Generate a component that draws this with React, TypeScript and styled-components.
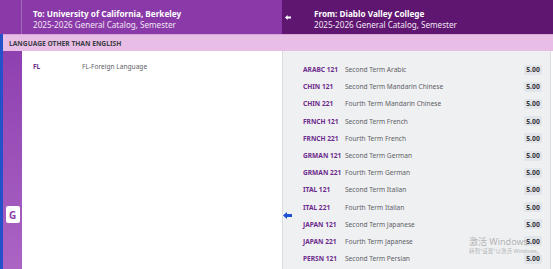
import React from 'react';
import styled, { createGlobalStyle } from 'styled-components';

const GlobalStyle = createGlobalStyle`
    html, body {
        margin: 0;
        padding: 0;
        background: #ffffff;
    }
    body {
        font-family: 'Noto Sans', 'Noto Sans CJK SC', sans-serif;
        overflow: hidden;
    }
`;

const Page = styled.div`
    position: relative;
    width: 553px;
    height: 269px;
    overflow: hidden;
    background: #ffffff;
`;

const Header = styled.div`
    display: flex;
    height: 34px;
`;

const HeaderSide = styled.div<{ $dark?: boolean }>`
    display: flex;
    align-items: stretch;
    flex: ${(p) => (p.$dark ? '1' : '0 0 282px')};
    background: ${(p) => (p.$dark ? '#5f1670' : '#8a3aa8')};
    color: #ffffff;
`;

const HeaderGutter = styled.div<{ $dark?: boolean }>`
    flex: 0 0 ${(p) => (p.$dark ? '21px' : '22px')};
    display: flex;
    align-items: center;
    justify-content: flex-start;
    padding-left: ${(p) => (p.$dark ? '3px' : '0')};
    padding-top: ${(p) => (p.$dark ? '1px' : '0')};
    box-sizing: border-box;
    border-right: ${(p) => (p.$dark ? 'none' : '1px solid #a46ac0')};
`;

const HeaderText = styled.div`
    display: flex;
    flex-direction: column;
    justify-content: center;
    padding: 3px 0 0 11px;
`;

const HeaderTitle = styled.div`
    font-size: 8.2px;
    font-weight: 700;
    line-height: 12px;
`;

const HeaderSub = styled.div`
    font-size: 8.1px;
    line-height: 10px;
    color: #f1e4f5;
`;

const Section = styled.div`
    border-left: 3px solid #2451c9;
`;

const Band = styled.div`
    height: 17px;
    display: flex;
    align-items: center;
    padding-left: 6px;
    background: #e8bde6;
    border-top: 1px solid #d7a6d6;
    box-sizing: border-box;
    font-size: 6.7px;
    font-weight: 700;
    color: #3d3d44;
`;

const Body = styled.div`
    position: relative;
    display: flex;
    height: 218px;
`;

const Gutter = styled.div`
    flex: 0 0 19px;
    display: flex;
    flex-direction: column;
    align-items: center;
    padding-top: 155px;
    box-sizing: border-box;
    background: linear-gradient(#8e40b0, #ab64c4);
`;

const Badge = styled.div`
    width: 14px;
    height: 17px;
    border-radius: 2px;
    background: #ffffff;
    display: flex;
    align-items: center;
    justify-content: center;
    font-size: 10px;
    font-weight: 700;
    color: #8a3aa8;
`;

const Target = styled.div`
    flex: 0 0 260px;
    padding: 10px 0 0 11px;
    box-sizing: border-box;
`;

const TargetRow = styled.div`
    display: flex;
    align-items: center;
    height: 10px;
    font-size: 6.6px;
`;

const Code = styled.span<{ $width: number }>`
    flex: 0 0 auto;
    min-width: ${(p) => p.$width}px;
    margin-right: 3px;
    white-space: nowrap;
    font-weight: 700;
    color: #6c2b8c;
`;

const Desc = styled.span`
    flex: 1;
    white-space: nowrap;
    color: #606066;
`;

const Source = styled.div`
    flex: 1;
    margin-right: 2px;
    padding: 10px 8px 0 20px;
    background: #eff0f2;
    border-left: 1px solid #dadce0;
    border-right: 1px solid #dadce0;
`;

const CourseRow = styled.div`
    display: flex;
    align-items: center;
    height: 17.2px;
    font-size: 6.6px;
`;

const Units = styled.span`
    width: 18px;
    height: 10px;
    display: flex;
    align-items: center;
    justify-content: center;
    border-radius: 2px;
    background: #e1e4e8;
    font-size: 6.8px;
    font-weight: 700;
    color: #35353a;
`;

const MapArrow = styled.div`
    position: absolute;
    left: 280px;
    top: 161px;
    width: 9px;
    height: 7px;
    display: flex;
`;

const Watermark = styled.div`
    position: absolute;
    left: 469px;
    top: 236px;
    color: rgba(150, 150, 150, 0.7);
    pointer-events: none;
`;

const WatermarkTitle = styled.div`
    font-size: 9px;
    line-height: 11px;
`;

const WatermarkSub = styled.div`
    font-size: 5.5px;
    line-height: 8px;
    white-space: nowrap;
`;

const courses = [
    ['ARABC 121', 'Second Term Arabic'],
    ['CHIN 121', 'Second Term Mandarin Chinese'],
    ['CHIN 221', 'Fourth Term Mandarin Chinese'],
    ['FRNCH 121', 'Second Term French'],
    ['FRNCH 221', 'Fourth Term French'],
    ['GRMAN 121', 'Second Term German'],
    ['GRMAN 221', 'Fourth Term German'],
    ['ITAL 121', 'Second Term Italian'],
    ['ITAL 221', 'Fourth Term Italian'],
    ['JAPAN 121', 'Second Term Japanese'],
    ['JAPAN 221', 'Fourth Term Japanese'],
    ['PERSN 121', 'Second Term Persian'],
];

const App = () => {
    return (
        <Page>
            <GlobalStyle />
            <Header>
                <HeaderSide>
                    <HeaderGutter />
                    <HeaderText>
                        <HeaderTitle>To: University of California, Berkeley</HeaderTitle>
                        <HeaderSub>2025-2026 General Catalog, Semester</HeaderSub>
                    </HeaderText>
                </HeaderSide>
                <HeaderSide $dark>
                    <HeaderGutter $dark>
                        <svg width="6" height="5" viewBox="0 0 6 5">
                            <path d="M0 2.5 L2.6 0 V1.6 H6 V3.4 H2.6 V5 Z" fill="#ffffff" />
                        </svg>
                    </HeaderGutter>
                    <HeaderText>
                        <HeaderTitle>From: Diablo Valley College</HeaderTitle>
                        <HeaderSub>2025-2026 General Catalog, Semester</HeaderSub>
                    </HeaderText>
                </HeaderSide>
            </Header>
            <Section>
                <Band>LANGUAGE OTHER THAN ENGLISH</Band>
                <Body>
                    <Gutter>
                        <Badge>G</Badge>
                    </Gutter>
                    <Target>
                        <TargetRow>
                            <Code $width={46}>FL</Code>
                            <Desc>FL-Foreign Language</Desc>
                        </TargetRow>
                    </Target>
                    <Source>
                        {courses.map(([code, title]) => (
                            <CourseRow key={code}>
                                <Code $width={39}>{code}</Code>
                                <Desc>{title}</Desc>
                                <Units>5.00</Units>
                            </CourseRow>
                        ))}
                    </Source>
                    <MapArrow>
                        <svg width="9" height="7" viewBox="0 0 9 7">
                            <path d="M0 3.5 L4 0 V2 H9 V5 H4 V7 Z" fill="#1f4fd1" />
                        </svg>
                    </MapArrow>
                </Body>
            </Section>
            <Watermark>
                <WatermarkTitle>激活 Windows</WatermarkTitle>
                <WatermarkSub>转到"设置"以激活 Windows。</WatermarkSub>
            </Watermark>
        </Page>
    );
};

export default App;
